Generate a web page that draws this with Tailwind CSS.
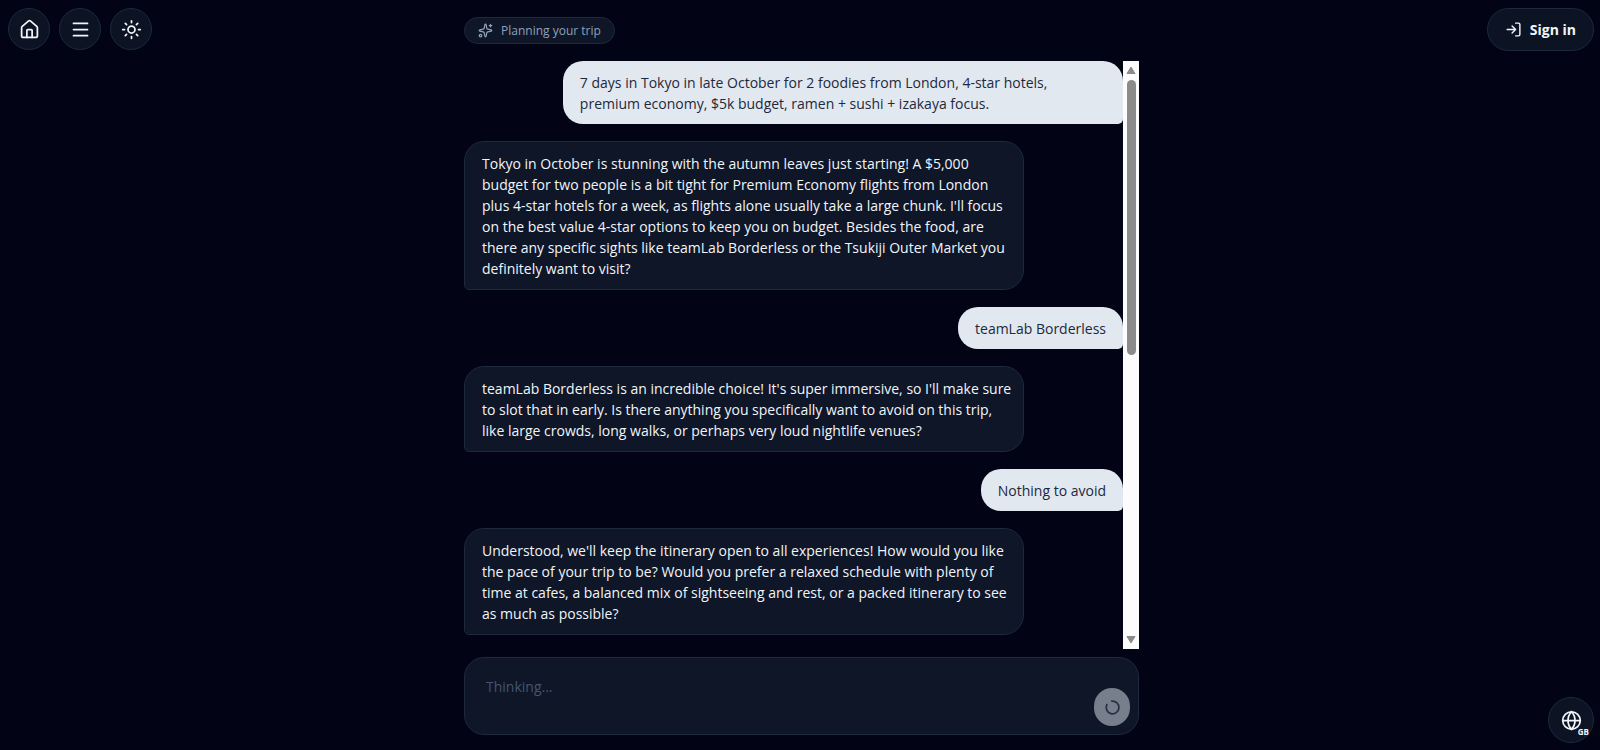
<!DOCTYPE html>
<html lang="en">
<head>
  <meta charset="UTF-8" />
  <meta name="viewport" content="width=device-width, initial-scale=1.0"/>
  <title>Trip Planner</title>
  <script src="https://cdn.jsdelivr.net/npm/@tailwindcss/browser@4"></script>
</head>
<body class="bg-[#020315] font-['Open_Sans','Noto_Sans',sans-serif] text-slate-100">

  <div class="relative flex h-screen flex-col">

    <!-- Top left actions -->
    <nav class="absolute left-2 top-2 flex gap-[9px]">
      <a href="#" aria-label="Home" class="flex size-[42px] items-center justify-center rounded-full border border-slate-800 bg-[#0c1424]">
        <svg class="size-[21px]" viewBox="0 0 24 24" fill="none" stroke="currentColor" stroke-width="2" stroke-linecap="round" stroke-linejoin="round"><path d="M15 21v-8a1 1 0 0 0-1-1h-4a1 1 0 0 0-1 1v8"/><path d="M3 10a2 2 0 0 1 .709-1.528l7-6a2 2 0 0 1 2.582 0l7 6A2 2 0 0 1 21 10v9a2 2 0 0 1-2 2H5a2 2 0 0 1-2-2z"/></svg>
      </a>
      <button type="button" aria-label="Menu" class="flex size-[42px] items-center justify-center rounded-full border border-slate-800 bg-[#0c1424]">
        <svg class="size-[21px]" viewBox="0 0 24 24" fill="none" stroke="currentColor" stroke-width="2" stroke-linecap="round"><path d="M4 5h16M4 12h16M4 19h16"/></svg>
      </button>
      <button type="button" aria-label="Toggle theme" class="flex size-[42px] items-center justify-center rounded-full border border-slate-800 bg-[#0c1424]">
        <svg class="size-[21px]" viewBox="0 0 24 24" fill="none" stroke="currentColor" stroke-width="2" stroke-linecap="round"><circle cx="12" cy="12" r="4"/><path d="M12 2v2M12 20v2m-7.07-17.07 1.41 1.41m11.32 11.32 1.41 1.41M2 12h2m16 0h2M6.34 17.66l-1.41 1.41M19.07 4.93l-1.41 1.41"/></svg>
      </button>
    </nav>

    <!-- Sign in -->
    <a href="#" class="absolute right-[6px] top-2 flex h-[43px] items-center gap-2 rounded-full border border-slate-800 bg-[#0c1424] px-[17px] text-[14px] font-bold">
      <svg class="size-[17px]" viewBox="0 0 24 24" fill="none" stroke="currentColor" stroke-width="2" stroke-linecap="round" stroke-linejoin="round"><path d="m10 17 5-5-5-5M15 12H3M15 3h4a2 2 0 0 1 2 2v14a2 2 0 0 1-2 2h-4"/></svg>
      Sign in
    </a>

    <main class="mx-auto flex min-h-0 w-full max-w-[678px] flex-1 flex-col pb-[15px] pl-[3px] pt-[17px]">
      <div class="flex">
        <div class="flex h-[27px] items-center gap-2 rounded-full border border-slate-800 bg-[#0e1628] px-[13px] text-[12px] text-slate-400">
          <svg class="size-[15px]" viewBox="0 0 24 24" fill="none" stroke="currentColor" stroke-width="2" stroke-linecap="round" stroke-linejoin="round"><path d="M11.017 2.814a1 1 0 0 1 1.966 0l1.051 5.558a2 2 0 0 0 1.594 1.594l5.558 1.051a1 1 0 0 1 0 1.966l-5.558 1.051a2 2 0 0 0-1.594 1.594l-1.051 5.558a1 1 0 0 1-1.966 0l-1.051-5.558a2 2 0 0 0-1.594-1.594l-5.558-1.051a1 1 0 0 1 0-1.966l5.558-1.051a2 2 0 0 0 1.594-1.594z"/><path d="M20 2v4M22 4h-4"/><circle cx="4" cy="20" r="2"/></svg>
          Planning your trip
        </div>
      </div>

      <!-- Conversation -->
      <div class="mt-[17px] flex min-h-0 flex-1">
        <div class="flex min-w-0 flex-1 flex-col items-start gap-[17px] overflow-hidden text-[14px] leading-[21px]">
          <div class="max-w-[85%] self-end rounded-[20px] rounded-br-[5px] bg-slate-200 px-[17px] pb-[10px] pt-[11px] text-slate-800">7 days in Tokyo in late October for 2 foodies from London, 4-star hotels, premium economy, $5k budget, ramen + sushi + izakaya focus.</div>
          <div class="w-[85%] rounded-[20px] rounded-bl-[5px] border border-slate-800 bg-[#0e1628] pb-[10px] pl-[17px] pr-2 pt-[11px]">Tokyo in October is stunning with the autumn leaves just starting! A $5,000<br>budget for two people is a bit tight for Premium Economy flights from London<br>plus 4-star hotels for a week, as flights alone usually take a large chunk. I'll focus<br>on the best value 4-star options to keep you on budget. Besides the food, are<br>there any specific sights like teamLab Borderless or the Tsukiji Outer Market you<br>definitely want to visit?</div>
          <div class="max-w-[85%] self-end rounded-[20px] rounded-br-[5px] bg-slate-200 px-[17px] pb-[10px] pt-[11px] text-slate-800">teamLab Borderless</div>
          <div class="w-[85%] rounded-[20px] rounded-bl-[5px] border border-slate-800 bg-[#0e1628] pb-[10px] pl-[17px] pr-2 pt-[11px]">teamLab Borderless is an incredible choice! It's super immersive, so I'll make sure<br>to slot that in early. Is there anything you specifically want to avoid on this trip,<br>like large crowds, long walks, or perhaps very loud nightlife venues?</div>
          <div class="max-w-[85%] self-end rounded-[20px] rounded-br-[5px] bg-slate-200 px-[17px] pb-[10px] pt-[11px] text-slate-800">Nothing to avoid</div>
          <div class="w-[85%] rounded-[20px] rounded-bl-[5px] border border-slate-800 bg-[#0e1628] pb-[10px] pl-[17px] pr-2 pt-[11px]">Understood, we'll keep the itinerary open to all experiences! How would you like<br>the pace of your trip to be? Would you prefer a relaxed schedule with plenty of<br>time at cafes, a balanced mix of sightseeing and rest, or a packed itinerary to see<br>as much as possible?</div>
        </div>

        <!-- Scroll track -->
        <div class="flex w-4 shrink-0 flex-col items-center bg-[#fcfcfc] py-[5px]" aria-hidden="true">
          <svg class="h-2 w-[10px]" viewBox="0 0 10 8" fill="#8b8b8b" stroke="#8b8b8b" stroke-linejoin="round"><path d="M5 1 9 7.500H1z"/></svg>
          <div class="flex w-full flex-1 flex-col items-center py-[6px]">
            <div class="h-1/2 w-[9px] rounded-full bg-[#8b8b8b]"></div>
          </div>
          <svg class="h-2 w-[10px]" viewBox="0 0 10 8" fill="#8b8b8b" stroke="#8b8b8b" stroke-linejoin="round"><path d="M5 7 9 .5H1z"/></svg>
        </div>
      </div>

      <!-- Composer -->
      <form class="mt-2 flex h-[78px] shrink-0 items-end rounded-[20px] border border-slate-800 bg-[#0e1628] p-2">
        <textarea aria-label="Message" placeholder="Thinking..." class="h-full min-w-0 flex-1 resize-none px-[13px] py-[10px] text-[14px] leading-[21px] outline-none placeholder:text-slate-600"></textarea>
        <button type="submit" aria-label="Send" disabled class="flex h-[38px] w-9 items-center justify-center rounded-full bg-[#777e8c] text-[#2a3142]">
          <svg class="size-[17px]" viewBox="0 0 24 24" fill="none" stroke="currentColor" stroke-width="2.500" stroke-linecap="round"><path d="M11 3a9 9 0 1 1-7 5"/></svg>
        </button>
      </form>
    </main>

    <!-- Region -->
    <button type="button" aria-label="Region: GB" class="absolute bottom-[7px] right-[6px] flex size-[46px] items-center justify-center rounded-full border border-slate-800 bg-[#0c1424]">
      <svg class="size-[21px]" viewBox="0 0 24 24" fill="none" stroke="currentColor" stroke-width="2" stroke-linecap="round"><circle cx="12" cy="12" r="10"/><path d="M12 2a14.500 14.500 0 0 0 0 20 14.500 14.500 0 0 0 0-20M2 12h20"/></svg>
      <span class="absolute bottom-1 right-1 text-[8px] font-bold leading-[12px]">GB</span>
    </button>
  </div>

</body>
</html>
